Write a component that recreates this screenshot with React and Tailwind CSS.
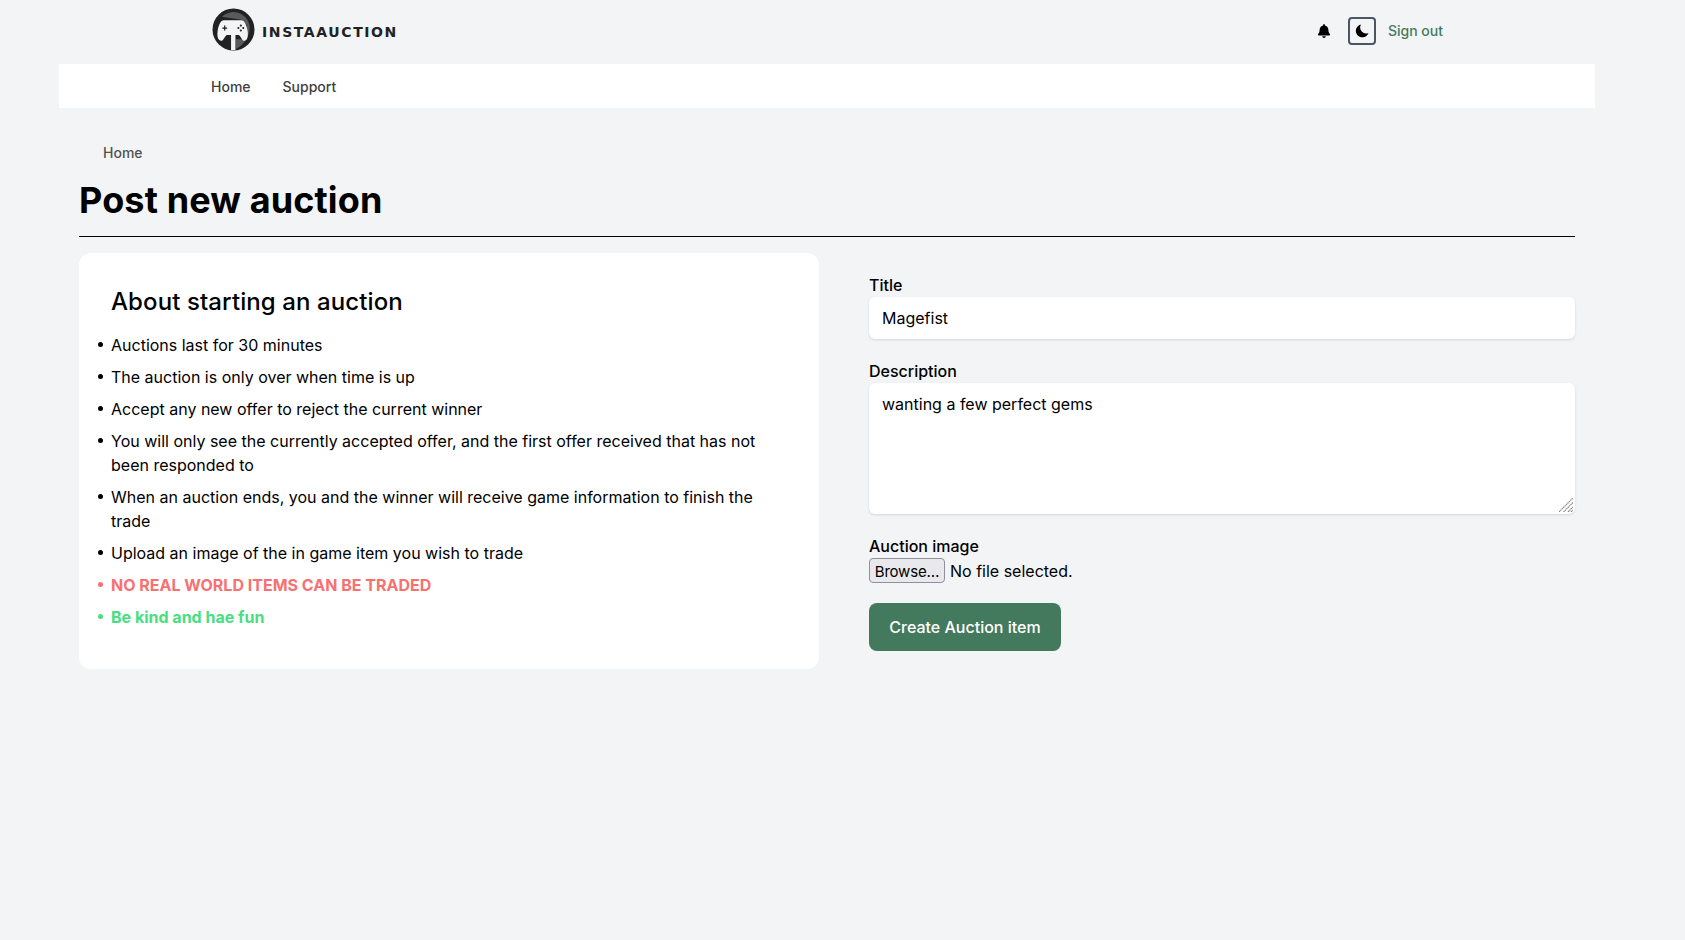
import React from "react";
import { FaBell } from "react-icons/fa";

const inter = "font-['Inter',sans-serif] [font-optical-sizing:none]";

const rules = [
  "Auctions last for 30 minutes",
  "The auction is only over when time is up",
  "Accept any new offer to reject the current winner",
  "You will only see the currently accepted offer, and the first offer received that has not been responded to",
  "When an auction ends, you and the winner will receive game information to finish the trade",
  "Upload an image of the in game item you wish to trade",
];

const Logo = () => (
  <svg className="mb-[6px]" width="43" height="43" viewBox="0 0 44 44">
    <circle cx="22" cy="22" r="21.5" fill="#222222" />
    <path d="M10 9 A17 17 0 0 1 38 16 C40 24 36 36 24.500 42 L24.500 32 L34 32 L36 18 L30 12 Z" fill="#5a5a5a" />
    <path d="M12 12.500 H30 C33 12.500 35.500 17 36.500 24 C37.200 29.500 36 33.500 33 33.500 C31 33.500 29.500 29 27.500 27.500 H24 V43 H19.500 V27.500 H15 C13 29 11.500 33.500 9.500 33.500 C6.500 33.500 5 29.500 5.700 24 C6.700 17 9 12.500 12 12.500 Z" fill="#f3f4f6" />
    <path d="M10.500 20.500 H15.500 M13 18 V23" stroke="#222222" strokeWidth="1.300" />
    <circle cx="29.500" cy="18" r="1.100" fill="#222222" />
    <circle cx="29.500" cy="23" r="1.100" fill="#222222" />
    <circle cx="27" cy="20.500" r="1.100" fill="#222222" />
    <circle cx="32" cy="20.500" r="1.100" fill="#222222" />
  </svg>
);

const Bullet = () => (
  <span className="mr-2 mt-[9px] h-[5px] w-[5px] shrink-0 rounded-full bg-current" />
);

export default function App() {
  return (
    <div className={`min-h-[940px] bg-[#f3f4f6] text-black ${inter}`}>
      <div className="ml-[59px] w-[1536px]">
        <header className="flex h-16 items-center justify-between pl-[153px] pr-[152px]">
          <a className="flex items-center gap-[7px]">
            <Logo />
            <span className="font-['DejaVu_Sans',sans-serif] text-[14px] font-bold tracking-[1.6px] text-[#222222]">
              INSTAAUCTION
            </span>
          </a>
          <div className="mb-[2px] flex items-center">
            <FaBell className="mr-[17px] text-[14px]" />
            <button className="mr-[12px] flex h-7 w-7 items-center justify-center rounded border-2 border-[#4b5563]">
              <svg width="16" height="16" viewBox="0 0 16 16">
                <path d="M7 1.500 A6.500 6.500 0 1 0 14.500 10 A6 6 0 0 1 7 1.500 Z" fill="#000000" />
              </svg>
            </button>
            <a className="text-sm font-medium text-[#437a5e]">Sign out</a>
          </div>
        </header>
        <nav className="flex h-[44px] items-center gap-8 bg-white pl-[152px] pt-[2px] text-sm font-medium text-[#404040]">
          <a>Home</a>
          <a>Support</a>
        </nav>
        <main className="px-5">
          <div className="pl-6 pt-[35px] text-sm font-medium leading-5 text-[#525252]">Home</div>
          <h1 className="mt-[15px] border-b border-black pb-[13px] text-4xl font-bold leading-[45px] tracking-[0.13px]">
            Post new auction
          </h1>
          <div className="mt-4 grid grid-cols-[740px_706px] gap-x-[50px]">
            <section className="h-[416px] rounded-xl bg-white pl-[19px] pr-8 pt-[33px]">
              <h2 className="pl-[13px] text-2xl font-[450] leading-8 tracking-[0.1px]">About starting an auction</h2>
              <ul className="mt-[15px] pr-4 text-base">
                {rules.map((rule) => (
                  <li key={rule} className="mb-2 flex leading-6">
                    <Bullet />
                    <span>{rule}</span>
                  </li>
                ))}
                <li className="mb-2 flex font-bold leading-6 text-[#f87171]">
                  <Bullet />
                  <span>NO REAL WORLD ITEMS CAN BE TRADED</span>
                </li>
                <li className="flex font-bold leading-6 text-[#4ade80]">
                  <Bullet />
                  <span>Be kind and hae fun</span>
                </li>
              </ul>
            </section>
            <form className="pt-5 text-base">
              <label className="block font-[450] leading-6">Title</label>
              <input
                defaultValue="Magefist"
                className="block h-[42px] w-full rounded-md bg-white px-[13px] pb-[1px] shadow outline-none"
              />
              <label className="mt-[20px] block font-[450] leading-6">Description</label>
              <div className="relative">
                <textarea
                  defaultValue="wanting a few perfect gems"
                  className="block h-[131px] w-full resize-none rounded-md bg-white px-[13px] py-[9px] shadow outline-none"
                />
                <svg
                  className="absolute bottom-[2px] right-[2px]"
                  width="14"
                  height="14"
                  viewBox="0 0 14 14"
                  stroke="#808080"
                  strokeWidth="1.200"
                  strokeDasharray="1.400 0.600"
                >
                  <path d="M0 14 L14 0 M4.500 14 L14 4.500 M9 14 L14 9 M12 14 L14 12" />
                </svg>
              </div>
              <label className="mt-[20px] block font-[450] leading-6">Auction image</label>
              <div className="flex h-[25px] items-center gap-[5px]">
                <button
                  type="button"
                  className="h-[25px] w-[76px] rounded-[4px] border border-[#8f8f9d] bg-[#e9e9ed] pt-[2px] text-[15px] leading-5 tracking-[-0.2px]"
                >
                  Browse…
                </button>
                <span>No file selected.</span>
              </div>
              <button
                type="button"
                className="mt-5 h-12 w-[192px] rounded-lg bg-[#437a5e] font-medium text-white"
              >
                Create Auction item
              </button>
            </form>
          </div>
        </main>
      </div>
    </div>
  );
}
